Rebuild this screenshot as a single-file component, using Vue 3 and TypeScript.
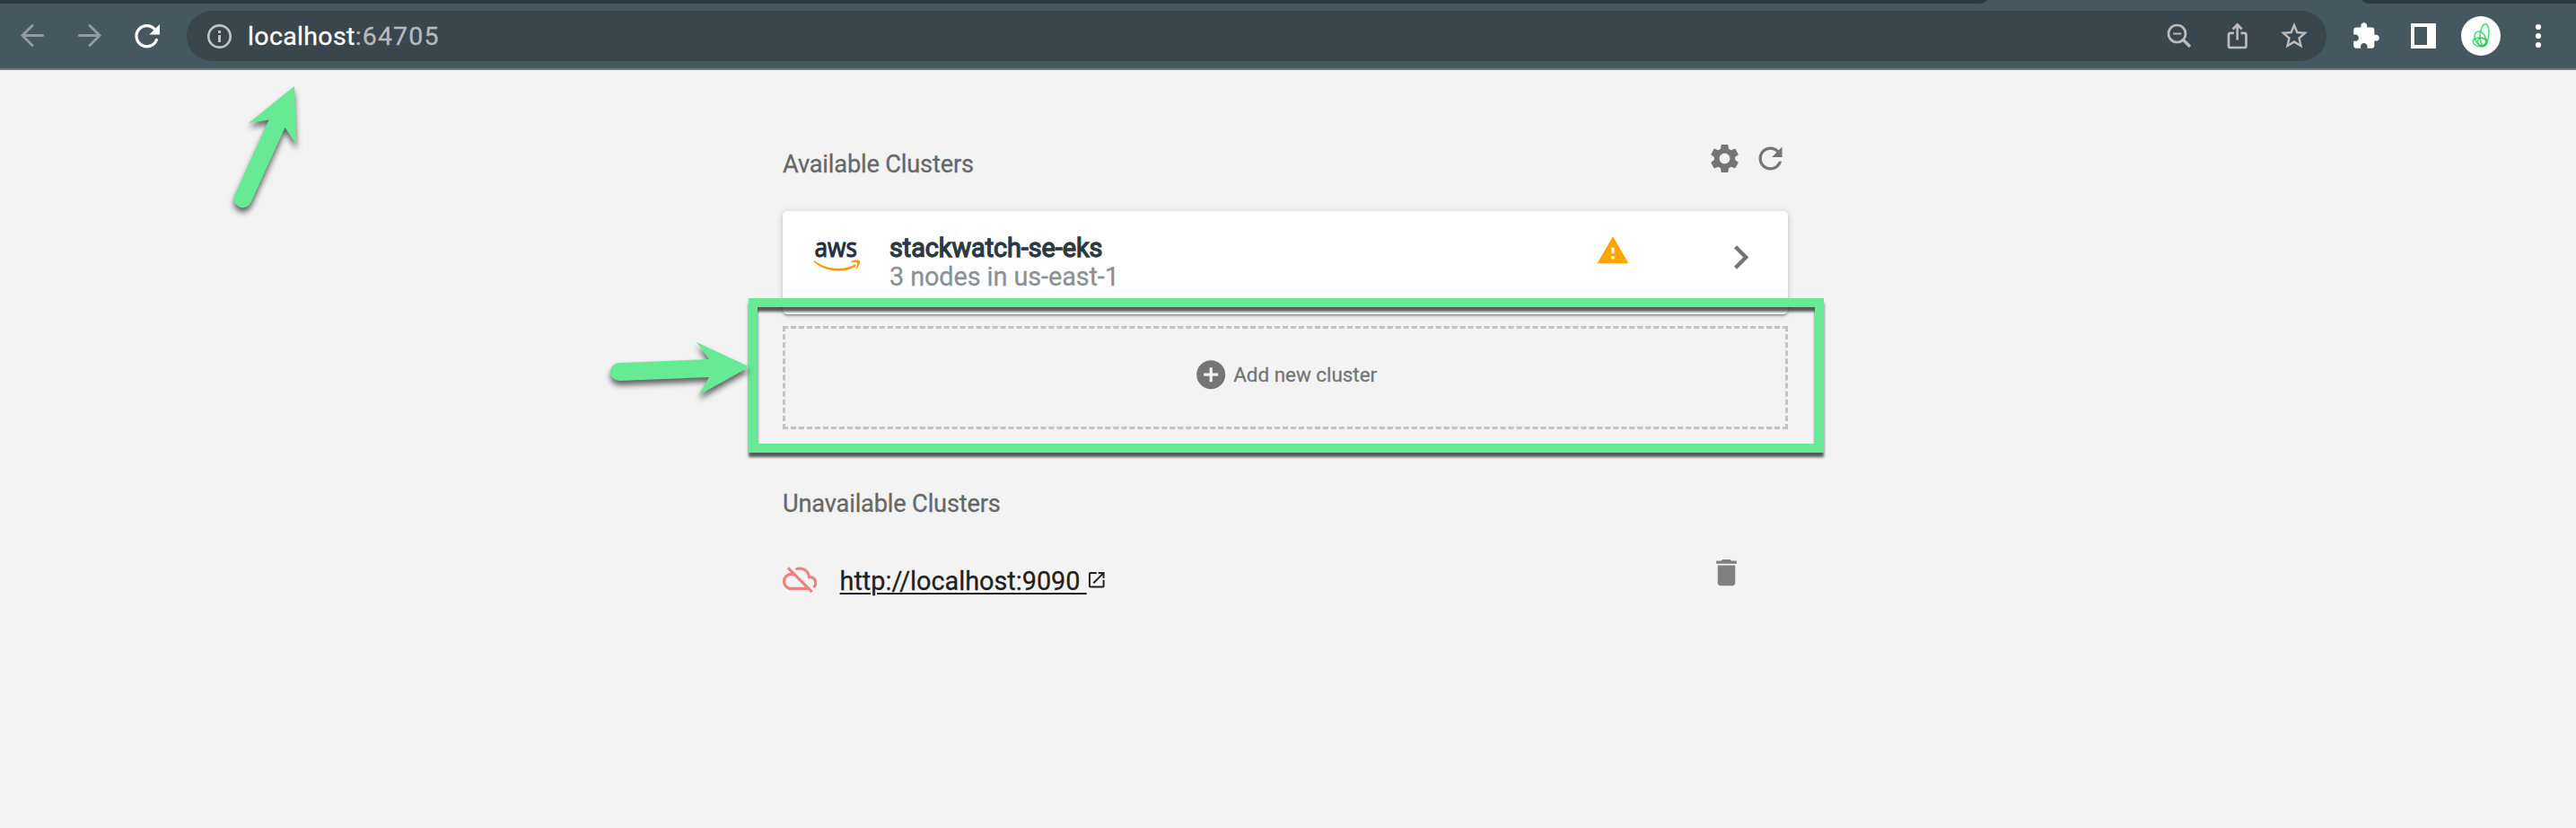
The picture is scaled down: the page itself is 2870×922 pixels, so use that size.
<script setup lang="ts">
interface Cluster {
  name: string
  nodes: number
  region: string
}

const host = 'localhost'
const port = ':64705'
const clusters: Cluster[] = [{ name: 'stackwatch-se-eks', nodes: 3, region: 'us-east-1' }]
const unavailable: string[] = ['http://localhost:9090']
</script>

<template>
  <div class="window">
    <header class="toolbar">
      <div class="tab-strip left"></div>
      <div class="tab-strip right"></div>
      <svg class="nav" viewBox="0 0 208 72">
        <g fill="none" stroke="#919ca3" stroke-width="3" stroke-linecap="round" stroke-linejoin="miter">
          <path d="M47.500 35.500H25.500M36 24.500L25 35.500L36 46.500" />
          <path d="M88.500 35.500H110.500M100 24.500L111 35.500L100 46.500" />
        </g>
        <path d="M174.400 40.500A11.600 11.600 0 1 1 172.500 28.700" fill="none" stroke="#fff" stroke-width="3.300" stroke-linecap="round" />
        <path d="M178 23V34.500H166.300Z" fill="#fff" />
      </svg>
      <div class="address">
        <svg class="info" viewBox="0 0 28 28">
          <circle cx="14.500" cy="14.500" r="12.200" fill="none" stroke="#bfc3c6" stroke-width="2.700" />
          <path d="M13 8h3v3h-3zM13 13h3v8h-3z" fill="#bfc3c6" />
        </svg>
        <p class="url"><span class="host">{{ host }}</span><span class="port">{{ port }}</span></p>
        <svg class="actions" viewBox="0 0 104 32">
          <g fill="none" stroke="#bcbcbc" stroke-width="2.700">
            <circle cx="11.500" cy="13.500" r="9.500" />
            <path d="M7.200 13.500h9" stroke-width="2" />
            <path d="M18.500 20.500l7.500 7.500" stroke-width="3.400" />
            <path d="M75 12.800H71a2 2 0 0 0-2 2V27a2 2 0 0 0 2 2H86.500a2 2 0 0 0 2-2V14.800a2 2 0 0 0-2-2H82.500" />
            <path d="M78.700 20.500V4M73.700 8.500l5-5l5 5" />
          </g>
        </svg>
        <svg class="star" viewBox="0 0 24 24">
          <path fill="#bcbcbc" d="M22 9.240l-7.190-.62L12 2 9.190 8.630 2 9.240l5.460 4.730L5.820 21 12 17.270 18.180 21l-1.630-7.030L22 9.240zM12 15.400l-3.760 2.270 1-4.280-3.320-2.880 4.380-.38L12 6.100l1.710 4.040 4.380.38-3.320 2.880 1 4.280L12 15.400z" />
        </svg>
      </div>
      <svg class="extras" viewBox="2600 4 270 72">
        <path transform="translate(2619.500 23.800) scale(1.360)" fill="#fff" d="M20.500 11H19V7c0-1.100-.9-2-2-2h-4V3.500C13 2.120 11.880 1 10.500 1S8 2.120 8 3.500V5H4c-1.100 0-1.990.9-1.990 2v3.800H3.500c1.490 0 2.700 1.210 2.700 2.700s-1.210 2.700-2.700 2.700H2V20c0 1.100.9 2 2 2h3.800v-1.500c0-1.490 1.210-2.700 2.700-2.700 1.490 0 2.700 1.210 2.700 2.700V22H17c1.100 0 2-.9 2-2v-4h1.500c1.380 0 2.500-1.120 2.500-2.500S21.880 11 20.500 11z" />
        <path fill="#fff" fill-rule="evenodd" d="M2686 26h28v28h-28zM2690 30v20h14V30z" />
        <circle cx="2764" cy="40" r="22" fill="#fff" />
        <g fill="none" stroke="#1fce55" stroke-width="1.700" stroke-opacity=".75">
          <ellipse cx="2768" cy="38.500" rx="4.800" ry="12" transform="rotate(6 2768 38.500)" />
          <ellipse cx="2763.500" cy="43" rx="5.800" ry="8.500" transform="rotate(-28 2763.500 43)" />
          <ellipse cx="2763" cy="47" rx="7.800" ry="4.800" transform="rotate(8 2763 47)" />
          <ellipse cx="2765.500" cy="46.500" rx="5" ry="4.500" />
        </g>
        <g fill="#fff">
          <circle cx="2828" cy="30" r="3.100" /><circle cx="2828" cy="40" r="3.100" /><circle cx="2828" cy="50" r="3.100" />
        </g>
      </svg>
    </header>

    <main class="content">
      <div class="section-head">
        <h2>Available Clusters</h2>
        <div class="tools">
          <svg viewBox="0 0 24 24"><path fill="#757575" d="M19.140 12.940c.04-.3.06-.61.06-.94 0-.32-.02-.64-.07-.94l2.030-1.580c.18-.14.23-.41.12-.61l-1.920-3.320c-.12-.22-.37-.29-.59-.22l-2.390.96c-.5-.38-1.030-.7-1.620-.94l-.36-2.540c-.04-.24-.24-.41-.48-.41h-3.840c-.24 0-.43.17-.47.41l-.36 2.540c-.59.24-1.130.57-1.620.94l-2.390-.96c-.22-.08-.47 0-.59.22L2.740 8.870c-.12.21-.08.47.12.61l2.030 1.580c-.05.3-.09.63-.09.94s.02.64.07.94l-2.030 1.580c-.18.14-.23.41-.12.61l1.920 3.320c.12.22.37.29.59.22l2.390-.96c.5.38 1.030.7 1.620.94l.36 2.540c.05.24.24.41.48.41h3.840c.24 0 .44-.17.47-.41l.36-2.540c.59-.24 1.130-.56 1.620-.94l2.390.96c.22.08.47 0 .59-.22l1.920-3.320c.12-.22.07-.47-.12-.61l-2.010-1.580zM12 15.600c-1.980 0-3.600-1.620-3.600-3.600s1.620-3.600 3.600-3.600 3.600 1.620 3.600 3.600-1.620 3.600-3.600 3.600z" /></svg>
          <svg viewBox="0 0 24 24"><path fill="#757575" d="M17.650 6.350C16.200 4.900 14.210 4 12 4c-4.420 0-7.990 3.580-7.990 8s3.570 8 7.990 8c3.730 0 6.840-2.550 7.730-6h-2.080c-.82 2.330-3.040 4-5.650 4-3.310 0-6-2.690-6-6s2.690-6 6-6c1.660 0 3.140.69 4.220 1.780L13 11h7V4l-2.350 2.350z" /></svg>
        </div>
      </div>

      <article v-for="c in clusters" :key="c.name" class="card">
        <svg class="aws" viewBox="0 0 56 44">
          <text x="2.500" y="22.500" textLength="47.500" lengthAdjust="spacingAndGlyphs">aws</text>
          <path d="M2 27C14 37 36 39 47.500 31.200L49 33C37 42 14 40 1.600 28.400Z" fill="#ff9900" />
          <path d="M43 28.500C46 26.200 51 26.200 53 27.200C53.500 30 51.500 34.500 49 36.500C48.500 36.600 48.300 36.300 48.600 35.700C49.600 33.500 50.600 30.800 50 29.500C48.800 28.600 46 29 43.500 29.300Z" fill="#ff9900" />
        </svg>
        <div class="info-text">
          <h3>{{ c.name }}</h3>
          <p>{{ c.nodes }} nodes in {{ c.region }}</p>
        </div>
        <svg class="warn" viewBox="0 0 24 24"><path fill="#ffa500" d="M1 21h22L12 2 1 21zm12-3h-2v-2h2v2zm0-4h-2v-4h2v4z" /></svg>
        <svg class="chevron" viewBox="0 0 24 24"><path fill="#757575" d="M10 6L8.590 7.410 13.170 12l-4.580 4.590L10 18l6-6z" /></svg>
      </article>

      <button class="add" type="button">
        <svg viewBox="0 0 24 24"><path fill="#757575" d="M12 2C6.480 2 2 6.480 2 12s4.480 10 10 10 10-4.480 10-10S17.520 2 12 2zm5 11h-4v4h-2v-4H7v-2h4V7h2v4h4v2z" /></svg>
        <span>Add new cluster</span>
      </button>

      <h2 class="second">Unavailable Clusters</h2>
      <div v-for="u in unavailable" :key="u" class="row">
        <svg class="cloud" viewBox="0 0 24 24"><path fill="#f08080" d="M24 15c0-2.640-2.050-4.780-4.650-4.960C18.670 6.590 15.640 4 12 4c-1.330 0-2.570.36-3.650.97l1.490 1.490C10.510 6.170 11.230 6 12 6c3.040 0 5.500 2.460 5.500 5.500v.5H19c1.660 0 3 1.340 3 3 0 .99-.48 1.850-1.210 2.400l1.410 1.410c1.090-.92 1.800-2.270 1.800-3.810zM4.410 3.860L3 5.270l2.770 2.770h-.42C2.340 8.360 0 10.910 0 14c0 3.310 2.690 6 6 6h11.730l2 2 1.410-1.410L4.410 3.860zM6 18c-2.210 0-4-1.790-4-4s1.790-4 4-4h1.730l8 8H6z" /></svg>
        <a class="link">{{ u + ' ' }}</a>
        <svg class="open" viewBox="0 0 24 24"><path fill="#1f1f1f" d="M19 19H5V5h7V3H5c-1.110 0-2 .9-2 2v14c0 1.100.89 2 2 2h14c1.100 0 2-.9 2-2v-7h-2v7zM14 3v2h3.590l-9.830 9.830 1.410 1.410L19 6.410V10h2V3h-7z" /></svg>
        <svg class="trash" viewBox="0 0 24 24"><path fill="#808080" d="M6 19c0 1.100.9 2 2 2h8c1.100 0 2-.9 2-2V7H6v12zM19 4h-3.500l-1-1h-5l-1 1H5v2h14V4z" /></svg>
      </div>
    </main>

    <div class="highlight"></div>
    <svg class="arrows" viewBox="0 0 2870 922">
      <g fill="#66ea94">
        <path d="M328 96L330.300 161L317.500 142L279.500 225.500A10 10 0 0 1 261 218L299.500 133.500L277 137Z" />
        <path d="M835 408.500L778.500 440L790 420L690 424A10 10 0 0 1 690 404L790 400L776 381Z" />
      </g>
    </svg>
  </div>
</template>

<style>
body { background: #f3f3f3; }
</style>

<style scoped>
.window { position: relative; width: 2870px; height: 922px; overflow: hidden; background: #f3f3f3; font-family: Roboto, "Liberation Sans", sans-serif; }
.toolbar { position: relative; box-sizing: border-box; display: flex; align-items: flex-start; height: 78px; padding-top: 4px; background: #455860; border-bottom: 2px solid #6e7e85; }
.tab-strip { position: absolute; top: 0; height: 4px; background: #2b383d; }
.left { left: 0; width: 2213px; border-bottom-right-radius: 8px 4px; }
.right { right: 0; width: 238px; border-bottom-left-radius: 8px 4px; }
.nav { width: 208px; height: 72px; flex: none; }
.address { box-sizing: border-box; display: flex; align-items: center; width: 2384px; height: 56px; margin-top: 8px; padding: 0 18px 0 22px; border-radius: 28px; background: #39464d; flex: none; }
.info { width: 28px; height: 28px; }
.url { flex: 1; margin: 0 0 0 18px; padding-top: 1px; font-size: 28.500px; line-height: 56px; -webkit-text-stroke-width: .3px; }
.host { color: #fff; letter-spacing: .35px; }
.port { color: #b5babd; letter-spacing: 1.150px; }
.actions { width: 104px; height: 32px; margin-right: 20.500px; }
.star { width: 36px; height: 36px; }
.extras { width: 270px; height: 72px; margin-left: 8px; flex: none; }
.content { width: 1120px; margin-left: 872px; -webkit-text-stroke-width: .3px; }
.section-head { display: flex; justify-content: space-between; height: 157px; box-sizing: border-box; padding-top: 79px; }
h2 { margin: 0; padding-top: 8px; font-size: 27.200px; letter-spacing: -.16px; line-height: 36px; font-weight: 400; color: #676767; }
.tools { display: flex; gap: 12px; }
.tools svg { width: 39px; height: 39px; }
.card { display: flex; box-sizing: border-box; height: 115px; border-radius: 5px; background: #fff; box-shadow: 0 3px 2px -2px rgba(0, 0, 0, .3), 0 2px 3px rgba(0, 0, 0, .16), 0 1px 8px rgba(0, 0, 0, .14); }
.aws { width: 56px; height: 44px; margin: 28px 0 0 33px; overflow: visible; }
.aws text { font: 400 29px "Noto Sans", sans-serif; fill: #252f3e; stroke: #252f3e; stroke-width: 1px; }
.info-text { width: 817px; padding: 25px 0 0 30px; box-sizing: border-box; }
h3, .info-text p { margin: 0; font-size: 28.800px; line-height: 32px; }
h3 { font-weight: 400; letter-spacing: -.04px; color: #2b3a42; -webkit-text-stroke-width: 1.300px; }
.info-text p { color: #889195; letter-spacing: -.07px; }
.warn { width: 38px; height: 38px; margin-top: 25px; }
.chevron { width: 53px; height: 53px; margin: 25px 0 0 96.500px; }
.add { display: flex; align-items: center; justify-content: center; gap: 6px; box-sizing: border-box; width: 1120px; height: 115px; margin: 13px 0 0; padding: 0 0 7px; border: 3px dashed #c3c3c3; background: none; font: 22.400px Roboto, sans-serif; color: #757575; }
.add svg { width: 38.400px; height: 38.400px; }
.second { margin-top: 57px; }
.row { display: flex; height: 60px; margin-top: 45.700px; }
.cloud { width: 38.400px; height: 38.400px; }
.link { margin: 5.500px 0 0 25.200px; font-size: 28.800px; line-height: 34px; white-space: pre; color: #1f1f1f; text-decoration: underline; text-decoration-thickness: 2px; text-underline-offset: 2.500px; }
.open { width: 23.500px; height: 23.500px; margin: 9.500px 0 0 -1px; }
.trash { width: 39px; height: 39px; margin: -6.700px 49px 0 auto; }
.highlight { position: absolute; left: 834px; top: 332px; width: 1178px; height: 152px; border: 10px solid #66ea94; filter: drop-shadow(0 5.500px 1.500px rgba(0, 0, 0, .64)); }
.arrows { position: absolute; left: 0; top: 0; width: 2870px; height: 922px; filter: drop-shadow(0 5px 3px rgba(0, 0, 0, .6)); }
</style>
